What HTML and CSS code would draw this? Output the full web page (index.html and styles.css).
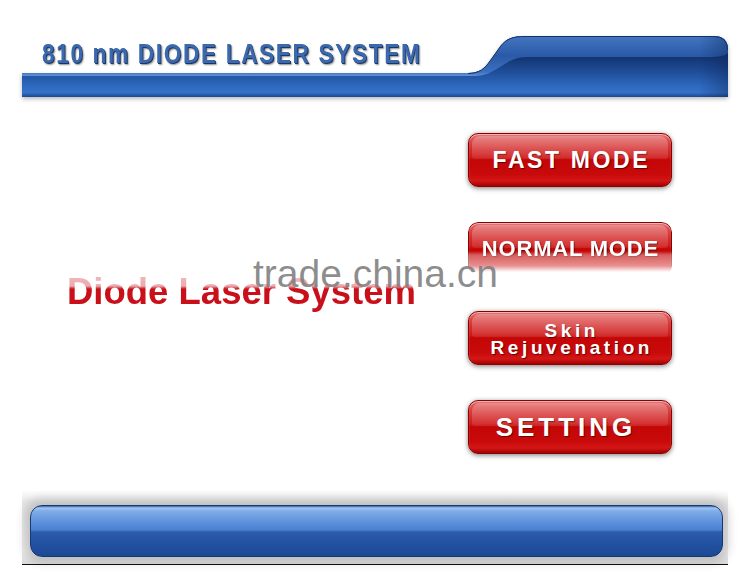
FILE: index.html
```html
<!DOCTYPE html>
<html lang="en">
<head>
<meta charset="utf-8">
<title>810 nm Diode Laser System</title>
<link rel="stylesheet" href="styles.css">
</head>
<body>
<div class="screen">
  <header class="topbar">
    <svg class="topbar-art" viewBox="0 0 706 62" width="706" height="62" aria-hidden="true">
      <defs>
        <linearGradient id="baseGrad" gradientUnits="userSpaceOnUse" x1="0" y1="0" x2="0" y2="62">
          <stop offset="0" stop-color="#1b4188"/>
          <stop offset="0.36" stop-color="#133572"/>
          <stop offset="0.58" stop-color="#1e4c96"/>
          <stop offset="0.82" stop-color="#2e69bf"/>
          <stop offset="0.93" stop-color="#3471c8"/>
          <stop offset="1" stop-color="#1d478c"/>
        </linearGradient>
        <linearGradient id="hiGrad" gradientUnits="userSpaceOnUse" x1="0" y1="0" x2="0" y2="42">
          <stop offset="0" stop-color="#4577c3"/>
          <stop offset="0.5" stop-color="#2a5aa7"/>
          <stop offset="0.88" stop-color="#3c70c0"/>
          <stop offset="1" stop-color="#6c9bdc"/>
        </linearGradient>
        <linearGradient id="edgeGrad" x1="0" y1="0" x2="1" y2="0">
          <stop offset="0" stop-color="#0c2658" stop-opacity="0"/>
          <stop offset="0.8" stop-color="#0c2658" stop-opacity="0"/>
          <stop offset="1" stop-color="#0c2658" stop-opacity="0.4"/>
        </linearGradient>
      </defs>
      <path d="M0,38 H446 C458,38 463,33 468,26 L478,12 C484,4 490,1 503,1 H692 Q706,1 706,15 V62 H0 Z" fill="url(#baseGrad)"/>
      <path d="M0,38 H446 C458,38 463,33 468,26 L478,12 C484,4 490,1 503,1 H692 Q706,1 706,15 V18 C702,21 696,22 686,22 H505 C492,22 486,27 478,32 C470,37 463,41 452,41 H0 Z" fill="url(#hiGrad)"/>
      <path d="M560,1 H692 Q706,1 706,15 V62 H560 Z" fill="url(#edgeGrad)"/>
      <path d="M446,38.5 C458,38.5 463,33 468,26 L478,12 C484,4 490,1.5 503,1.5 H692 Q705.5,1.5 705.5,15" fill="none" stroke="#163369" stroke-width="1"/>
    </svg>
    <h1 class="title">810 nm DIODE LASER SYSTEM</h1>
  </header>

  <main class="content">
    <div class="brand">
      <p class="brand-text">Diode Laser System</p>
    </div>
    <nav class="menu">
      <button class="menu-btn fast">FAST MODE</button>
      <button class="menu-btn normal">NORMAL MODE</button>
      <button class="menu-btn skin"><span>Skin</span><span>Rejuvenation</span></button>
      <button class="menu-btn setting">SETTING</button>
    </nav>
    <div class="watermark">trade.china.cn</div>
  </main>

  <footer class="statusbar">
    <div class="status-pill"></div>
  </footer>
</div>
</body>
</html>
```

FILE: styles.css
```css
html, body {
  margin: 0;
  padding: 0;
  background: #ffffff;
}

.screen {
  width: 750px;
  height: 574px;
  overflow: hidden;
  font-family: "Liberation Sans", Arial, sans-serif;
}

/* ---------- header ---------- */
.topbar {
  display: grid;
  width: 706px;
  height: 62px;
  margin: 35px 22px 0;
}

.topbar > * {
  grid-area: 1 / 1;
}

.topbar-art {
  display: block;
  filter: drop-shadow(0 2px 2px rgba(0, 0, 0, 0.28));
}

.title {
  margin: 0;
  padding: 5px 0 0 20px;
  font-size: 28px;
  line-height: 28px;
  font-weight: bold;
  letter-spacing: 2px;
  color: #3a69ad;
  white-space: nowrap;
  transform: scaleX(0.81);
  transform-origin: 20px 0;
  text-shadow: 1px 1px 0 #1d3566, 2px 2px 2px rgba(0, 0, 0, 0.45);
  align-self: start;
}

/* ---------- main ---------- */
.content {
  position: relative;
  height: 393px;
  display: grid;
  grid-template-columns: 1fr 204px;
  padding-right: 78px;
}

.brand {
  padding: 175px 0 0 67px;
}

.brand-text {
  margin: 0;
  font-size: 36.5px;
  line-height: 40px;
  font-weight: bold;
  color: #c9101a;
  white-space: nowrap;
  -webkit-mask-image: linear-gradient(to bottom, transparent 2px, rgba(0,0,0,0.3) 4px, rgba(0,0,0,0.35) 14px, #000 17px);
  mask-image: linear-gradient(to bottom, transparent 2px, rgba(0,0,0,0.3) 4px, rgba(0,0,0,0.35) 14px, #000 17px);
}

.menu {
  display: flex;
  flex-direction: column;
  gap: 35px;
  padding-top: 36px;
}

.menu-btn {
  position: relative;
  display: flex;
  flex-direction: column;
  align-items: center;
  justify-content: center;
  width: 204px;
  height: 54px;
  padding: 0;
  border: 1px solid #8c0000;
  border-radius: 10px;
  background: linear-gradient(to bottom,
    #e47272 0%, #dc4c4c 10%, #d52c2c 30%, #cf1b1b 44%,
    #c40606 50%, #c80a0a 78%, #d41616 90%, #a30000 100%);
  box-shadow: 0 2px 5px rgba(0, 0, 0, 0.35), 0 0 4px rgba(0, 0, 0, 0.2),
    inset 0 1px 1px rgba(255, 220, 220, 0.7);
  color: #ffffff;
  font-family: "Liberation Sans", Arial, sans-serif;
  font-weight: bold;
  text-shadow: 1px 1px 1px rgba(70, 0, 0, 0.75);
  cursor: pointer;
}

.menu-btn::before {
  content: "";
  position: absolute;
  left: 3px;
  right: 3px;
  top: 2px;
  height: 44%;
  border-radius: 8px 8px 3px 3px;
  background: linear-gradient(to bottom, rgba(255,255,255,0.28), rgba(255,255,255,0.08));
  pointer-events: none;
}

.fast {
  font-size: 23px;
  letter-spacing: 2.6px;
  padding-left: 2.6px;
}

.normal {
  font-size: 22px;
  letter-spacing: 0.8px;
  padding-left: 0.8px;
  -webkit-mask-image: linear-gradient(to bottom, #000 0, #000 29px, rgba(0,0,0,0.65) 33px, rgba(0,0,0,0.45) 44px, transparent 50px);
  mask-image: linear-gradient(to bottom, #000 0, #000 29px, rgba(0,0,0,0.65) 33px, rgba(0,0,0,0.45) 44px, transparent 50px);
}

.skin {
  font-size: 19px;
  line-height: 17px;
  letter-spacing: 3.6px;
  padding-left: 3.6px;
  padding-top: 1px;
}

.setting {
  font-size: 26px;
  letter-spacing: 4px;
  padding-right: 8px;
}

.watermark {
  position: absolute;
  left: 253px;
  top: 157px;
  font-family: "Liberation Sans", Arial, sans-serif;
  font-size: 39px;
  line-height: 39px;
  color: rgba(125, 125, 125, 0.88);
  white-space: nowrap;
  pointer-events: none;
}

/* ---------- footer ---------- */
.statusbar {
  width: 706px;
  height: 74px;
  margin: 0 22px;
  border-bottom: 1px solid #111111;
  display: flex;
  background: linear-gradient(to bottom, #ffffff 0, #e6e6e6 12px, #eeeeee 60px, #dcdcdc 74px);
}

.status-pill {
  flex: 1;
  height: 52px;
  margin: 15px 5px 0 8px;
  box-sizing: border-box;
  border: 1px solid #17386f;
  border-radius: 12px;
  background: linear-gradient(to bottom,
    #3560a8 0, #a2c6f2 2px, #80ade8 5px, #5f91dc 16px, #4b80d1 24px,
    #2c5cab 26px, #214f9f 40px, #1d4993 50px);
  box-shadow: 0 0 10px 6px rgba(0, 0, 0, 0.16);
}
```
